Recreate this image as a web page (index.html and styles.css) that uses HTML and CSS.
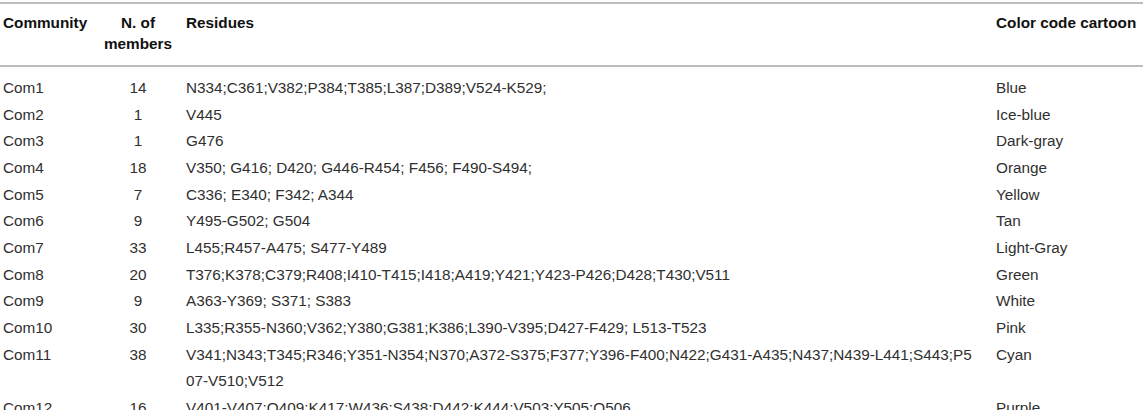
FILE: index.html
```html
<!DOCTYPE html>
<html lang="en">
<head>
<meta charset="utf-8">
<title>Communities</title>
<link rel="stylesheet" href="styles.css">
</head>
<body>
<table class="comm-table">
  <colgroup>
    <col class="c-name">
    <col class="c-num">
    <col class="c-res">
    <col class="c-color">
  </colgroup>
  <thead>
    <tr>
      <th class="name">Community</th>
      <th class="num">N. of<br>members</th>
      <th class="res">Residues</th>
      <th class="color">Color code cartoon</th>
    </tr>
  </thead>
  <tbody>
    <tr><td class="name">Com1</td><td class="num">14</td><td class="res">N334;C361;V382;P384;T385;L387;D389;V524-K529;</td><td class="color">Blue</td></tr>
    <tr><td class="name">Com2</td><td class="num">1</td><td class="res">V445</td><td class="color">Ice-blue</td></tr>
    <tr><td class="name">Com3</td><td class="num">1</td><td class="res">G476</td><td class="color">Dark-gray</td></tr>
    <tr><td class="name">Com4</td><td class="num">18</td><td class="res">V350; G416; D420; G446-R454; F456; F490-S494;</td><td class="color">Orange</td></tr>
    <tr><td class="name">Com5</td><td class="num">7</td><td class="res">C336; E340; F342; A344</td><td class="color">Yellow</td></tr>
    <tr><td class="name">Com6</td><td class="num">9</td><td class="res">Y495-G502; G504</td><td class="color">Tan</td></tr>
    <tr><td class="name">Com7</td><td class="num">33</td><td class="res">L455;R457-A475; S477-Y489</td><td class="color">Light-Gray</td></tr>
    <tr><td class="name">Com8</td><td class="num">20</td><td class="res">T376;K378;C379;R408;I410-T415;I418;A419;Y421;Y423-P426;D428;T430;V511</td><td class="color">Green</td></tr>
    <tr><td class="name">Com9</td><td class="num">9</td><td class="res">A363-Y369; S371; S383</td><td class="color">White</td></tr>
    <tr><td class="name">Com10</td><td class="num">30</td><td class="res">L335;R355-N360;V362;Y380;G381;K386;L390-V395;D427-F429; L513-T523</td><td class="color">Pink</td></tr>
    <tr><td class="name">Com11</td><td class="num">38</td><td class="res">V341;N343;T345;R346;Y351-N354;N370;A372-S375;F377;Y396-F400;N422;G431-A435;N437;N439-L441;S443;P507-V510;V512</td><td class="color">Cyan</td></tr>
    <tr><td class="name">Com12</td><td class="num">16</td><td class="res">V401-V407;Q409;K417;W436;S438;D442;K444;V503;Y505;Q506</td><td class="color">Purple</td></tr>
  </tbody>
</table>
</body>
</html>
```
FILE: styles.css
```css
html, body {
  margin: 0;
  padding: 0;
  background: #ffffff;
}

body {
  font-family: "Liberation Sans", Arial, Helvetica, sans-serif;
  font-size: 15.3px;
  color: #303030;
}

.comm-table {
  width: 1143px;
  margin-top: 2px;
  border-collapse: collapse;
  table-layout: fixed;
  border-top: 2px solid #bdbdbd;
}

.c-name { width: 100px; }
.c-num { width: 76px; }
.c-res { width: 814px; }
.c-color { width: 153px; }

.comm-table th {
  font-weight: bold;
  color: #111111;
  text-align: left;
  vertical-align: top;
  line-height: 21px;
  padding: 8px 0 11px 0;
  border-bottom: 2px solid #bdbdbd;
}

.comm-table td {
  line-height: 26.67px;
  padding: 0;
  vertical-align: top;
}

.comm-table tbody tr:first-child td {
  padding-top: 8px;
}

.comm-table .name { padding-left: 3px; }
.comm-table .num { text-align: center; }
.comm-table .res {
  padding-left: 10px;
  padding-right: 14px;
  word-break: break-all;
}
.comm-table .color { padding-left: 6px; }
```
